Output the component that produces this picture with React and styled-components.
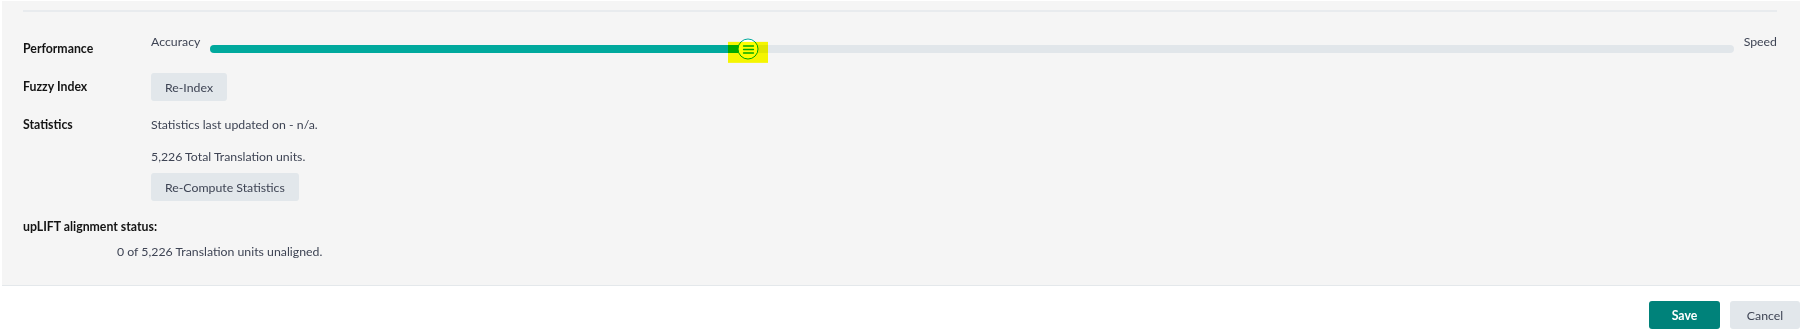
import React from 'react';
import styled, { createGlobalStyle } from 'styled-components';

const GlobalStyle = createGlobalStyle`
  html, body {
    margin: 0;
    padding: 0;
    background: #fff;
  }
  body {
    font-family: Lato, "Open Sans", sans-serif;
    font-size: 12.3px;
    color: #3e4454;
  }
`;

const Panel = styled.div`
  margin: 1px 0 0 2px;
  padding: 9px 23px 25px 21px;
  background: #f5f5f5;
  border-bottom: 1px solid #e4e8eb;
`;

const Section = styled.div`
  border-top: 2px solid #e8ebee;
  padding-top: 22px;
  display: flex;
  flex-direction: column;
`;

const Row = styled.div`
  display: grid;
  grid-template-columns: 128px 1fr;
  align-items: ${(p) => p.$align || 'center'};
  margin-top: ${(p) => p.$gap || 0}px;
`;

const Label = styled.div`
  font-weight: 700;
  color: #141414;
  line-height: 16px;
  margin-top: ${(p) => p.$gap || 0}px;
`;

const Text = styled.div`
  line-height: 16px;
  margin-top: ${(p) => p.$gap || 0}px;
  padding-left: ${(p) => p.$indent || 0}px;
`;

const Stack = styled.div`
  display: flex;
  flex-direction: column;
  align-items: flex-start;
`;

const GreyButton = styled.button`
  font-family: inherit;
  font-size: 12.3px;
  height: 28px;
  min-width: ${(p) => p.$min || 0}px;
  padding: 0 14px;
  margin-top: ${(p) => p.$gap || 0}px;
  background: #e2e7eb;
  color: #3e4454;
  border: none;
  border-radius: 3px;
  cursor: pointer;
`;

const SliderWrap = styled.div`
  display: flex;
  align-items: flex-start;
  gap: 10px;
  height: 30px;
`;

const End = styled.span`
  line-height: 16px;
`;

const Track = styled.div`
  position: relative;
  flex: 1;
  height: 8px;
  margin-top: 11px;
  border-radius: 4px;
  background: #e1e6ea;
`;

const Fill = styled.div`
  height: 100%;
  border-radius: 4px 0 0 4px;
  background: #00a99d;
`;

const Thumb = styled.div`
  position: absolute;
  top: 50%;
  width: 21px;
  height: 21px;
  box-sizing: border-box;
  transform: translate(-50%, -50%);
  border: 1.5px solid #00a99d;
  border-radius: 50%;
  background: #fff;
  display: flex;
  align-items: center;
  justify-content: center;
`;

const Highlight = styled.div`
  position: absolute;
  top: 50%;
  width: 40px;
  height: 21px;
  transform: translate(-50%, -34%);
  background: #ffff00;
  mix-blend-mode: multiply;
  pointer-events: none;
`;

const Footer = styled.div`
  display: flex;
  justify-content: flex-end;
  gap: 10px;
  padding-top: 15px;
`;

const SaveButton = styled.button`
  font-family: inherit;
  font-size: 12.3px;
  font-weight: 700;
  width: 71px;
  height: 28px;
  background: #00827a;
  color: #fff;
  border: none;
  border-radius: 3px;
  cursor: pointer;
`;

const Slider = ({ value }) => (
  <SliderWrap>
    <End>Accuracy</End>
    <Track>
      <Fill style={{ width: `${value}%` }} />
      <Thumb style={{ left: `${value}%` }}>
        <svg width="12" height="10" viewBox="0 0 12 10">
          <path d="M1 1.5h10M1 5h10M1 8.5h10" stroke="#00a99d" strokeWidth="1.4" strokeLinecap="round" />
        </svg>
      </Thumb>
      <Highlight style={{ left: `${value}%` }} />
    </Track>
    <End>Speed</End>
  </SliderWrap>
);

const App = () => (
  <>
    <GlobalStyle />
    <Panel>
      <Section>
        <Row>
          <Label>Performance</Label>
          <Slider value={35.3} />
        </Row>
        <Row $gap={9}>
          <Label>Fuzzy Index</Label>
          <Stack>
            <GreyButton>Re-Index</GreyButton>
          </Stack>
        </Row>
        <Row $gap={16} $align="start">
          <Label>Statistics</Label>
          <Stack>
            <Text>Statistics last updated on - n/a.</Text>
            <Text $gap={16}>5,226 Total Translation units.</Text>
            <GreyButton $gap={8}>Re-Compute Statistics</GreyButton>
          </Stack>
        </Row>
        <Label $gap={18}>upLIFT alignment status:</Label>
        <Text $gap={9} $indent={94}>0 of 5,226 Translation units unaligned.</Text>
      </Section>
    </Panel>
    <Footer>
      <SaveButton>Save</SaveButton>
      <GreyButton $min={70}>Cancel</GreyButton>
    </Footer>
  </>
);

export default App;
